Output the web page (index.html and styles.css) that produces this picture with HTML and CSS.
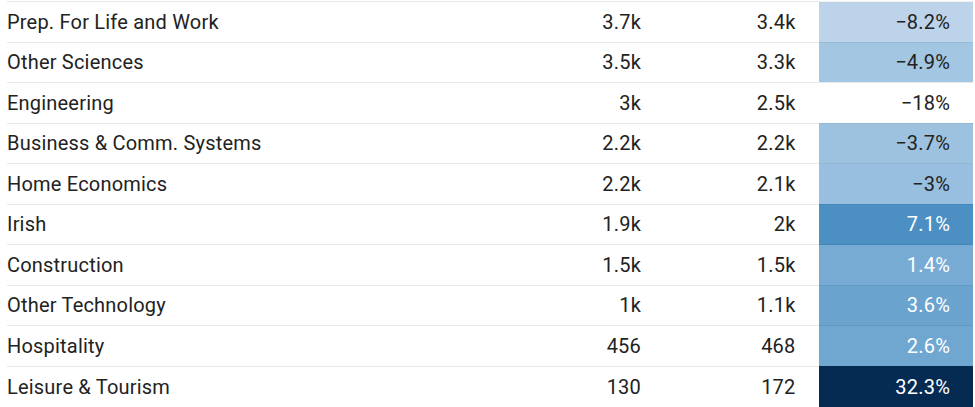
FILE: index.html
```html
<!DOCTYPE html>
<html>
<head>
<meta charset="utf-8">
<link rel="stylesheet" href="styles.css">
</head>
<body>
<table class="grid">
  <colgroup>
    <col class="c-name"><col class="c-num"><col class="c-num"><col class="c-num">
  </colgroup>
  <tbody>
    <tr><td class="name">Prep. For Life and Work</td><td class="num">3.7k</td><td class="num">3.4k</td><td class="num heat h1">−8.2%</td></tr>
    <tr><td class="name">Other Sciences</td><td class="num">3.5k</td><td class="num">3.3k</td><td class="num heat h2">−4.9%</td></tr>
    <tr><td class="name">Engineering</td><td class="num">3k</td><td class="num">2.5k</td><td class="num heat h0">−18%</td></tr>
    <tr><td class="name">Business &amp; Comm. Systems</td><td class="num">2.2k</td><td class="num">2.2k</td><td class="num heat h3">−3.7%</td></tr>
    <tr><td class="name">Home Economics</td><td class="num">2.2k</td><td class="num">2.1k</td><td class="num heat h4">−3%</td></tr>
    <tr><td class="name">Irish</td><td class="num">1.9k</td><td class="num">2k</td><td class="num heat h5 light">7.1%</td></tr>
    <tr><td class="name">Construction</td><td class="num">1.5k</td><td class="num">1.5k</td><td class="num heat h6 light">1.4%</td></tr>
    <tr><td class="name">Other Technology</td><td class="num">1k</td><td class="num">1.1k</td><td class="num heat h7 light">3.6%</td></tr>
    <tr><td class="name">Hospitality</td><td class="num">456</td><td class="num">468</td><td class="num heat h8 light">2.6%</td></tr>
    <tr class="last"><td class="name">Leisure &amp; Tourism</td><td class="num">130</td><td class="num">172</td><td class="num heat h9 light">32.3%</td></tr>
  </tbody>
</table>
</body>
</html>
```

FILE: styles.css
```css
html, body {
  margin: 0;
  padding: 0;
  background: #ffffff;
}
body {
  padding: 1px 2px 0 7px;
  font-family: Roboto, "Liberation Sans", sans-serif;
  color: #222222;
}
.grid {
  border-collapse: collapse;
  width: 966px;
  table-layout: fixed;
  font-size: 20px;
  letter-spacing: 0.2px;
}
.c-name { width: 502.5px; }
.c-num { width: 154.5px; }
.grid td {
  height: 39.5px;
  padding: 0;
  border-top: 1px solid #e9e9e9;
  vertical-align: middle;
  white-space: nowrap;
}
.grid tr.last td { height: 40px; }
.name { text-align: left; }
.num { text-align: right; padding-right: 23px !important; }
.heat { border-top-color: rgba(0,0,0,0.06) !important; }
.h0 { background: #ffffff; border-top-color: #e9e9e9 !important; }
.h1 { background: #bcd3ea; }
.h2 { background: #a3c6e2; }
.h3 { background: #9dc2e0; }
.h4 { background: #98bfdf; }
.h5 { background: #4b8fc3; }
.h6 { background: #77abd3; }
.h7 { background: #6aa3ce; }
.h8 { background: #6fa7d1; }
.h9 { background: #052b53; }
.light { color: #ffffff; }
```
